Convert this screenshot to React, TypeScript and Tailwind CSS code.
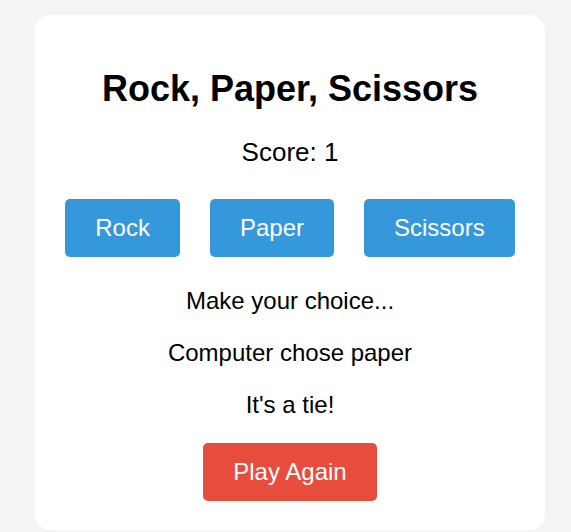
const choices = ['Rock', 'Paper', 'Scissors'];

const App = () => {
  return (
    <div className="min-h-[532px] bg-[#f4f4f4] pt-[15px] font-['Liberation_Sans',Arial,sans-serif] text-black">
      <div className="ml-[35px] flex w-[510px] flex-col items-center rounded-[15px] bg-white pt-[54px] pb-[29px] text-center">
        <h1 className="text-[36px] font-bold leading-[40px]">Rock, Paper, Scissors</h1>
        <p className="mt-[29px] text-[26px] leading-[28px]">Score: 1</p>

        <div className="mt-[33px] flex gap-[30px]">
          {choices.map((c) => (
            <button
              key={c}
              className="cursor-pointer rounded-[5px] bg-[#3498db] px-[30px] py-[15px] text-[24px] leading-[28px] text-white"
            >
              {c}
            </button>
          ))}
        </div>

        <p className="mt-[30px] text-[24px] leading-[28px]">Make your choice...</p>
        <p className="mt-6 text-[24px] leading-[28px]">Computer chose paper</p>
        <p className="mt-6 text-[24px] leading-[28px]">It's a tie!</p>

        <button className="mt-6 cursor-pointer rounded-[5px] bg-[#e74c3c] px-[30px] py-[15px] text-[24px] leading-[28px] text-white">
          Play Again
        </button>
      </div>
    </div>
  );
};

export default App;
